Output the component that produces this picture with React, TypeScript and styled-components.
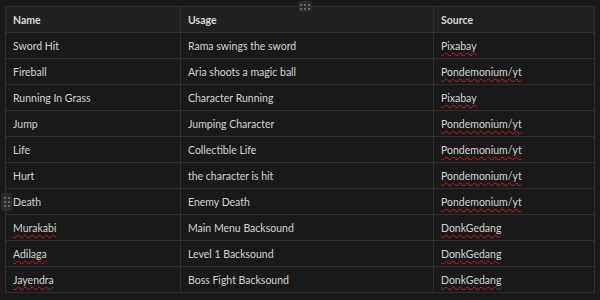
import React from 'react';
import styled, { createGlobalStyle } from 'styled-components';

const GlobalStyle = createGlobalStyle`
  html, body {
    margin: 0;
    background: #191919;
  }
  body {
    font-family: Lato, 'Noto Sans', sans-serif;
    color: #d4d4d4;
  }
`;

const rows = [
  { name: 'Sword Hit', usage: 'Rama swings the sword', source: 'Pixabay', nameTypo: false },
  { name: 'Fireball', usage: 'Aria shoots a magic ball', source: 'Pondemonium/yt', nameTypo: false },
  { name: 'Running In Grass', usage: 'Character Running', source: 'Pixabay', nameTypo: false },
  { name: 'Jump', usage: 'Jumping Character', source: 'Pondemonium/yt', nameTypo: false },
  { name: 'Life', usage: 'Collectible Life', source: 'Pondemonium/yt', nameTypo: false },
  { name: 'Hurt', usage: 'the character is hit', source: 'Pondemonium/yt', nameTypo: false },
  { name: 'Death', usage: 'Enemy Death', source: 'Pondemonium/yt', nameTypo: false },
  { name: 'Murakabi', usage: 'Main Menu Backsound', source: 'DonkGedang', nameTypo: true },
  { name: 'Adilaga', usage: 'Level 1 Backsound', source: 'DonkGedang', nameTypo: true },
  { name: 'Jayendra', usage: 'Boss Fight Backsound', source: 'DonkGedang', nameTypo: true },
];

const App = () => {
  return (
    <Page>
      <GlobalStyle />
      <TableWrap>
        <ColHandle>
          {Array.from({ length: 6 }).map((_, i) => (
            <Dot key={i} />
          ))}
        </ColHandle>
        <RowHandle>
          {Array.from({ length: 6 }).map((_, i) => (
            <Dot key={i} />
          ))}
        </RowHandle>
        <Table>
          <colgroup>
            <col style={{ width: 175 }} />
            <col style={{ width: 253 }} />
            <col style={{ width: 161 }} />
          </colgroup>
          <thead>
            <tr>
              <HeadCell>Name</HeadCell>
              <HeadCell>Usage</HeadCell>
              <HeadCell>Source</HeadCell>
            </tr>
          </thead>
          <tbody>
            {rows.map((r) => (
              <tr key={r.name}>
                <Cell>
                  <Word $typo={r.nameTypo}>{r.name}</Word>
                </Cell>
                <Cell>{r.usage}</Cell>
                <Cell>
                  <Word $typo>{r.source}</Word>
                </Cell>
              </tr>
            ))}
          </tbody>
        </Table>
      </TableWrap>
    </Page>
  );
};

export default App;

const Page = styled.div`
  padding: 6px 6px 0 5px;
  height: 300px;
  box-sizing: border-box;
`;

const TableWrap = styled.div`
  position: relative;
  width: 590px;
`;

const Table = styled.table`
  border-collapse: collapse;
  table-layout: fixed;
  width: 590px;
  font-size: 10.5px;
`;

const HeadCell = styled.th`
  height: 26px;
  padding: 0 7px;
  box-sizing: border-box;
  text-align: left;
  font-weight: 700;
  color: #d8d8d8;
  background: #202020;
  border: 1px solid #2f2f2f;
`;

const Cell = styled.td`
  height: 26px;
  padding: 0 7px;
  box-sizing: border-box;
  background: #191919;
  border: 1px solid #2f2f2f;
  color: #d4d4d4;
  white-space: nowrap;
`;

const Word = styled.span<{ $typo?: boolean }>`
  text-decoration: ${(p) => (p.$typo ? 'underline wavy #d01818' : 'none')};
  text-decoration-thickness: 1px;
  text-underline-offset: 2px;
`;

const ColHandle = styled.div`
  position: absolute;
  top: -5px;
  left: 293px;
  width: 14px;
  height: 11px;
  border-radius: 3px;
  background: #2c2c2c;
  display: grid;
  grid-template-columns: repeat(3, 2px);
  grid-template-rows: repeat(2, 2px);
  gap: 2px;
  place-content: center;
  z-index: 2;
`;

const RowHandle = styled.div`
  position: absolute;
  top: 187px;
  left: -4px;
  width: 11px;
  height: 18px;
  border-radius: 3px;
  background: #2c2c2c;
  display: grid;
  grid-template-columns: repeat(2, 2px);
  grid-template-rows: repeat(3, 2px);
  gap: 2px;
  place-content: center;
  z-index: 2;
`;

const Dot = styled.span`
  width: 2px;
  height: 2px;
  border-radius: 1px;
  background: #7d7d7d;
`;
